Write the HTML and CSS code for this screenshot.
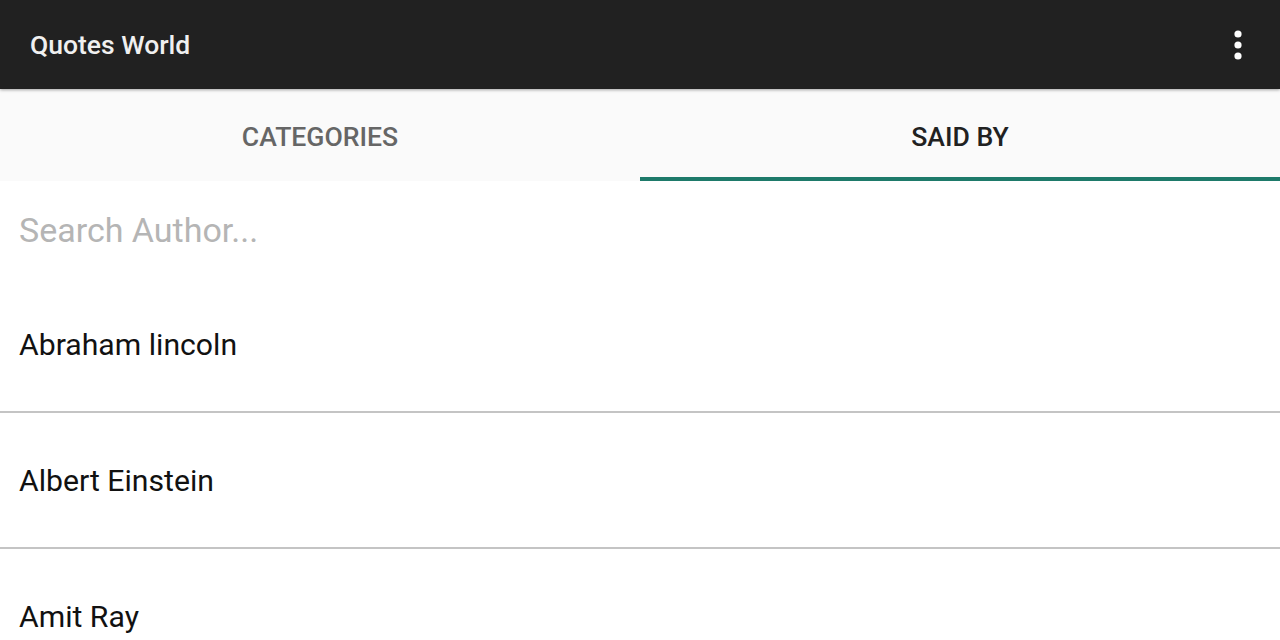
FILE: index.html
```html
<!DOCTYPE html>
<html>
<head>
<meta charset="utf-8">
<link rel="stylesheet" href="styles.css">
</head>
<body>
<div class="app">
  <header class="appbar">
    <div class="title">Quotes World</div>
    <svg class="menu" width="12" height="36" viewBox="0 0 12 36"><circle cx="6" cy="7" r="3.6" fill="#fff"/><circle cx="6" cy="18" r="3.6" fill="#fff"/><circle cx="6" cy="29" r="3.6" fill="#fff"/></svg>
  </header>
  <nav class="tabs">
    <div class="tab">CATEGORIES</div>
    <div class="tab active">SAID BY</div>
  </nav>
  <div class="search">Search Author...</div>
  <ul class="list">
    <li class="row">Abraham lincoln</li>
    <li class="row">Albert Einstein</li>
    <li class="row">Amit Ray</li>
  </ul>
</div>
</body>
</html>
```
FILE: styles.css
```css
html, body { margin: 0; padding: 0; }
body { background: #fff; font-family: Roboto, "Noto Sans", sans-serif; overflow: hidden; }
.app { width: 1280px; height: 640px; overflow: hidden; display: flex; flex-direction: column; }
.appbar {
  height: 89px; background: #212121; display: flex; align-items: center; justify-content: space-between;
  padding: 0 36px 0 30px; box-shadow: 0 1px 3px rgba(0,0,0,0.35); position: relative; z-index: 2; flex: none;
}
.title { color: #f0f0f0; font-size: 26.5px; font-weight: 500; }
.tabs { height: 92px; background: #fafafa; display: flex; flex: none; }
.tab {
  flex: 1; display: flex; align-items: center; justify-content: center; font-size: 26.6px; font-weight: 500;
  color: #666; box-sizing: border-box; padding-top: 2px;
}
.tab.active { color: #212121; border-bottom: 4px solid #1e7a6a; padding-top: 6px; }
.search { height: 96px; display: flex; align-items: center; padding: 0 19px; font-size: 34px; color: #b5b5b5; flex: none; box-sizing: border-box; padding-top: 2px; }
.list { list-style: none; margin: 0; padding: 0; }
.row {
  height: 134px; display: flex; align-items: center; padding: 0 19px; font-size: 30.2px; color: #111;
  border-bottom: 2px solid #c4c4c4;
}
```
